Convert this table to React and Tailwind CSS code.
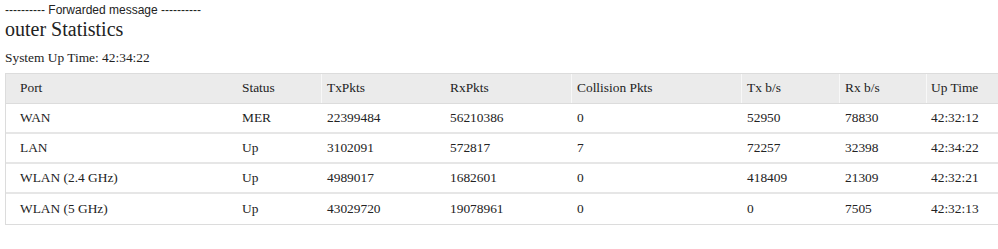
import React from "react";

const cols = [
  { name: "Port", w: "w-[231px]", pl: "pl-[14px]", sep: false },
  { name: "Status", w: "w-[84px]", pl: "pl-[5px]", sep: false },
  { name: "TxPkts", w: "w-[125px]", pl: "pl-[5px]", sep: true },
  { name: "RxPkts", w: "w-[125px]", pl: "pl-[4px]", sep: false },
  { name: "Collision Pkts", w: "w-[170px]", pl: "pl-[5px]", sep: true },
  { name: "Tx b/s", w: "w-[98px]", pl: "pl-[5px]", sep: true },
  { name: "Rx b/s", w: "w-[87px]", pl: "pl-[5px]", sep: true },
  { name: "Up Time", w: "w-[72px]", pl: "pl-[4px]", sep: true },
];

const rows = [
  ["WAN", "MER", "22399484", "56210386", "0", "52950", "78830", "42:32:12"],
  ["LAN", "Up", "3102091", "572817", "7", "72257", "32398", "42:34:22"],
  ["WLAN (2.4 GHz)", "Up", "4989017", "1682601", "0", "418409", "21309", "42:32:21"],
  ["WLAN (5 GHz)", "Up", "43029720", "19078961", "0", "0", "7505", "42:32:13"],
];

export default function App() {
  return (
    <div className="bg-white w-[998px] h-[249px] overflow-hidden text-[#222] pl-[5px] font-['Liberation_Serif','Times_New_Roman',serif]">
      <div className="pt-[3px] text-[12px] leading-[14px] text-[#222] font-['Liberation_Sans',Arial,sans-serif]">
        ---------- Forwarded message ----------
      </div>
      <div className="text-[20px] leading-[24px] text-[#222]">outer Statistics</div>
      <div className="mt-[9px] text-[13.4px] leading-[15px]">System Up Time: 42:34:22</div>
      <div className="mt-[8px] w-[994px] border border-[#dcdcdc] border-r-0">
        <div className="flex bg-[#ebebeb] h-[30px] items-center text-[13.4px] border-b border-[#dcdcdc]">
          {cols.map((c) => (
            <div key={c.name} className={`${c.w} ${c.pl} h-full flex items-center ${c.sep ? "border-l border-[#f8f8f8]" : ""}`}>
              {c.name}
            </div>
          ))}
        </div>
        {rows.map((r, i) => (
          <div key={i} className={`flex h-[30px] items-center text-[13.4px] ${i < rows.length - 1 ? "border-b-2 border-[#e6e6e6]" : ""}`}>
            {r.map((v, j) => (
              <div key={j} className={`${cols[j].w} ${cols[j].pl} ${cols[j].sep ? "border-l border-transparent" : ""}`}>
                {v}
              </div>
            ))}
          </div>
        ))}
      </div>
    </div>
  );
}
